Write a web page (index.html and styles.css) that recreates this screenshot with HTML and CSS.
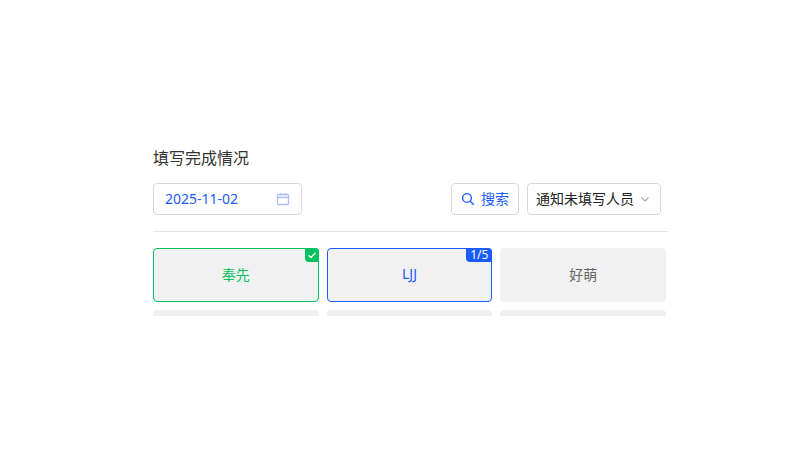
FILE: index.html
```html
<!DOCTYPE html>
<html lang="zh-CN">
<head>
    <meta charset="UTF-8">
    <title>填写完成情况</title>
    <link rel="stylesheet" href="styles.css">
</head>
<body>
    <div class="panel">
        <h2 class="panel-title">填写完成情况</h2>

        <div class="toolbar">
            <div class="date-input">
                <span>2025-11-02</span>
                <svg class="calendar-icon" viewBox="0 0 14 14" width="14" height="14">
                    <rect x="1.5" y="2.5" width="11" height="10" rx="1" fill="none" stroke="currentColor" stroke-width="1.3"/>
                    <path d="M1.5 5.5h11M4.5 1v2.5M9.5 1v2.5" fill="none" stroke="currentColor" stroke-width="1.3"/>
                </svg>
            </div>
            <div class="actions">
                <button class="btn btn-search">
                    <svg viewBox="0 0 14 14" width="14" height="14">
                        <circle cx="6" cy="6" r="4.4" fill="none" stroke="currentColor" stroke-width="1.4"/>
                        <path d="M9.2 9.2l3.6 3.6" fill="none" stroke="currentColor" stroke-width="1.4"/>
                    </svg>
                    搜索
                </button>
                <button class="btn btn-notify">
                    通知未填写人员
                    <svg viewBox="0 0 10 10" width="10" height="10">
                        <path d="M1.5 3.5l3.5 3.5 3.5-3.5" fill="none" stroke="currentColor" stroke-width="1.1"/>
                    </svg>
                </button>
            </div>
        </div>

        <div class="people">
            <div class="person person-done">
                <span class="person-name">奉先</span>
                <span class="badge badge-done">
                    <svg viewBox="0 0 10 10" width="10" height="10">
                        <path d="M1.5 5.2l2.4 2.3 4.6-4.6" fill="none" stroke="currentColor" stroke-width="1.3"/>
                    </svg>
                </span>
            </div>
            <div class="person person-partial">
                <span class="person-name">LJJ</span>
                <span class="badge badge-partial">1/5</span>
            </div>
            <div class="person"><span class="person-name">好萌</span></div>
            <div class="person"></div>
            <div class="person"></div>
            <div class="person"></div>
        </div>
    </div>
</body>
</html>
```

FILE: styles.css
```css
* {
    margin: 0;
    padding: 0;
    box-sizing: border-box;
    font-family: "Noto Sans", "Noto Sans CJK SC", sans-serif;
}

body {
    background-color: #ffffff;
    color: #333333;
    padding: 147px 132px 0 153px;
}

.panel-title {
    font-size: 16px;
    font-weight: 400;
    line-height: 22px;
    color: #333333;
    margin-bottom: 14px;
}

.toolbar {
    display: flex;
    justify-content: space-between;
    padding-right: 7px;
    padding-bottom: 16px;
    border-bottom: 1px solid #e5e5e5;
    margin-bottom: 14px;
}

.date-input {
    display: flex;
    align-items: center;
    justify-content: space-between;
    width: 149px;
    height: 32px;
    padding: 0 11px;
    border: 1px solid #d9d9d9;
    border-radius: 4px;
    font-size: 14px;
    color: #1a5cff;
}

.date-input span {
    margin-bottom: 2px;
}

.calendar-icon {
    color: #a9c0fb;
}

.actions {
    display: flex;
    gap: 8px;
}

.btn {
    display: flex;
    align-items: center;
    height: 32px;
    padding-bottom: 2px;
    border: 1px solid #d9d9d9;
    border-radius: 4px;
    background-color: #ffffff;
    font-size: 14px;
}

.btn svg {
    margin-top: 2px;
}

.btn-search {
    width: 68px;
    padding-left: 9px;
    gap: 6px;
    color: #1a5cff;
}

.btn-notify {
    width: 134px;
    padding-left: 8px;
    gap: 6px;
    color: #222222;
}

.btn-notify svg {
    color: #a8a8a8;
}

.people {
    display: grid;
    grid-template-columns: repeat(3, 165.67px);
    grid-auto-rows: 54px;
    gap: 8px;
    height: 70px;
    padding-top: 2px;
    overflow: hidden;
}

.person {
    position: relative;
    display: flex;
    align-items: center;
    justify-content: center;
    background-color: #f1f1f1;
    border-radius: 4px;
    font-size: 14px;
    color: #666666;
}

.person-name {
    margin-bottom: 3px;
}

.person-done {
    border: 1px solid #07c160;
    color: #07c160;
}

.person-partial {
    border: 1px solid #1a5cff;
    color: #1a5cff;
}

.badge {
    position: absolute;
    top: -1px;
    right: -1px;
    display: flex;
    align-items: center;
    justify-content: center;
    height: 14px;
    color: #ffffff;
    border-radius: 0 4px 0 4px;
    font-size: 12px;
    line-height: 14px;
}

.badge-done {
    width: 14px;
    background-color: #07c160;
}

.badge-partial {
    width: 26px;
    background-color: #1a5cff;
}
```
